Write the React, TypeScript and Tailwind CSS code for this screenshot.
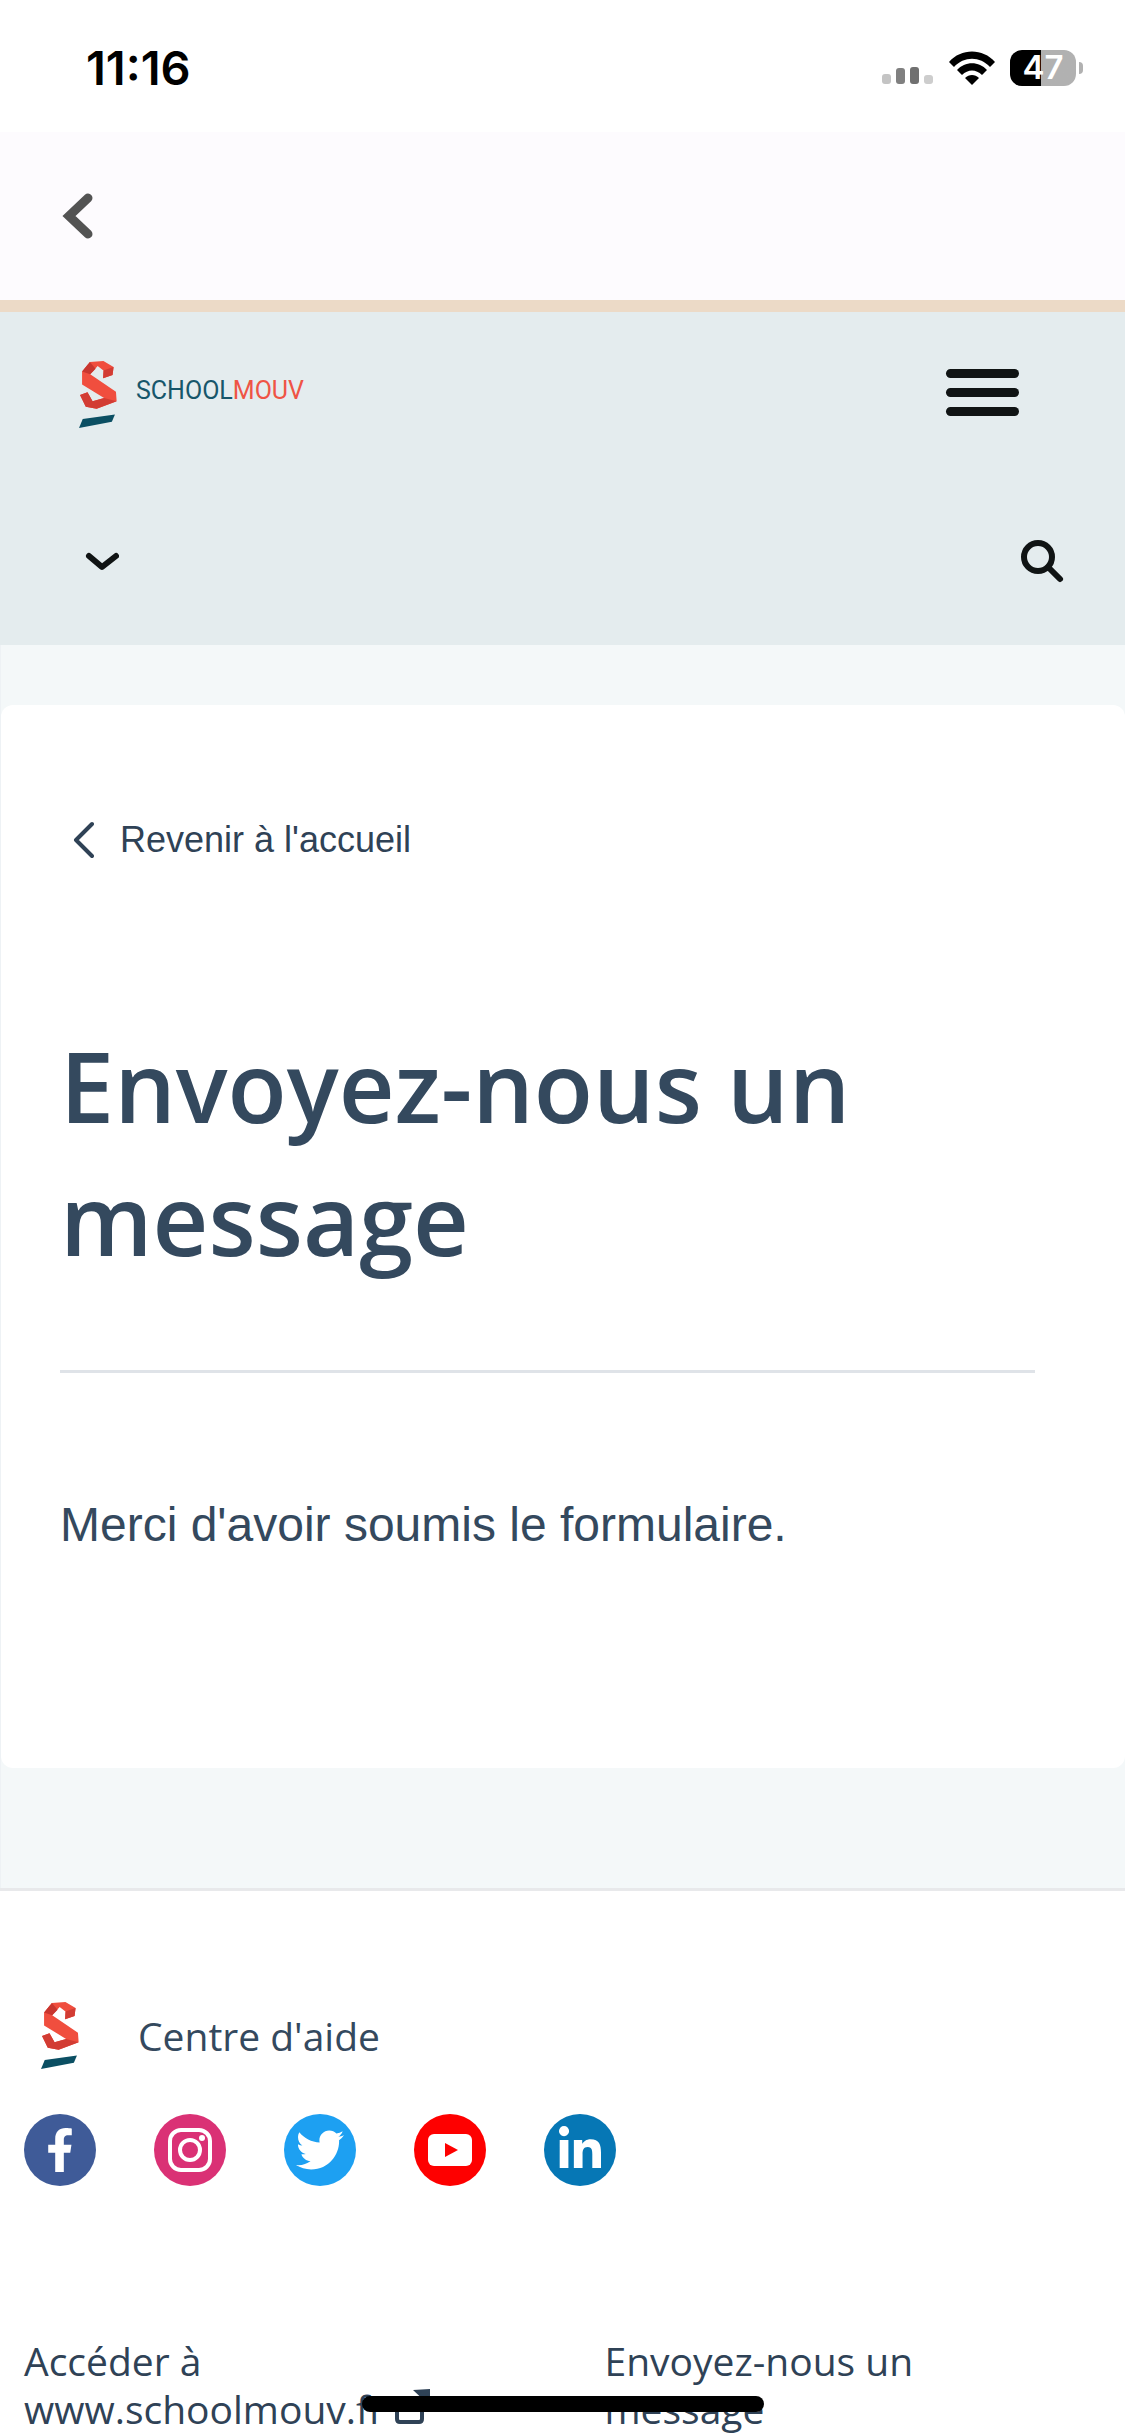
import { FaFacebookF, FaTwitter, FaLinkedinIn } from 'react-icons/fa';

const SOCIALS = [
  { name: 'Facebook', bg: 'bg-[#3f5b98]' },
  { name: 'Instagram', bg: 'bg-[#da3175]' },
  { name: 'Twitter', bg: 'bg-[#1da0f2]' },
  { name: 'YouTube', bg: 'bg-[#fe0000]' },
  { name: 'LinkedIn', bg: 'bg-[#0677b5]' },
];

function SocialIcon({ name }: { name: string }) {
  switch (name) {
    case 'Facebook':
      return <FaFacebookF className="size-11" />;
    case 'Instagram':
      return (
        <svg viewBox="0 0 44 44" className="w-11" fill="none" stroke="white" strokeWidth="4">
          <rect x="2" y="2" width="40" height="40" rx="11" />
          <circle cx="22" cy="22" r="10" />
          <circle cx="34" cy="10" r="3" fill="white" stroke="none" />
        </svg>
      );
    case 'Twitter':
      return <FaTwitter className="size-12" />;
    case 'LinkedIn':
      return <FaLinkedinIn className="size-12" />;
    default:
      return (
        <svg viewBox="0 0 44 32" className="w-11">
          <rect width="44" height="32" rx="6" fill="white" />
          <path d="M17 9v14l13-7z" fill="#fe0000" />
        </svg>
      );
  }
}

function RibbonLogo({ className }: { className: string }) {
  return (
    <svg viewBox="120 66 118 204" className={className} aria-hidden="true">
      <path d="M132 100 155 72 195 69 225 87 222 110 194 120 196 98 178 84 156 108 232 160 234 188 175 210 143 204 126 169 148 161 163 188 197 178 132 138z" fill="#f04e3e" />
      <path d="M132 100 155 72 172 92 156 108z" fill="#c8362f" />
      <path d="M195 97 225 87 222 110 194 120z" fill="#d23c33" />
      <path d="M126 169 148 161 163 188 197 178 234 188 175 210 143 204z" fill="#d23c33" />
      <path d="M134 240 229 227 220 248 123 267z" fill="#0b4f63" />
    </svg>
  );
}

function StatusBar() {
  return (
    <div className="flex h-[132px] shrink-0 items-center justify-between bg-white pt-1 pr-[42px] pl-[86px]">
      <span className="font-[Inter,sans-serif] text-[47px] font-semibold text-black">11:16</span>
      <div className="flex items-center gap-[15px]">
        <svg viewBox="0 0 52 36" className="w-[52px]" aria-hidden="true">
          <rect x="0" y="24" width="9" height="10" rx="3" fill="#c4c4c4" />
          <rect x="14" y="18" width="9" height="16" rx="3" fill="#808080" />
          <rect x="28" y="17" width="9" height="17" rx="3" fill="#707070" />
          <rect x="42" y="25" width="9" height="9" rx="3" fill="#cdcdcd" />
        </svg>
        <svg viewBox="0 0 46 34" className="w-[46px]" aria-hidden="true">
          <path d="M0 11C12-3 34-3 46 11L41 16C31 5 15 5 5 16z" />
          <path d="M8 19C16 10 30 10 38 19L33 24C27 18 19 18 13 24z" />
          <path d="M16 27C20 23 26 23 30 27L23 34z" />
        </svg>
        <div className="flex items-center gap-[3px]">
          <div className="flex h-9 w-[66px] items-center justify-center rounded-xl bg-linear-to-r from-black from-47% to-[#b1b1b1] to-47% font-[Inter,sans-serif] text-[33px] font-semibold text-white">
            47
          </div>
          <div className="h-3 w-1 rounded-r-full bg-[#b1b1b1]" />
        </div>
      </div>
    </div>
  );
}

function Header() {
  return (
    <header className="shrink-0 bg-[#e4ecee]">
      <div className="flex h-[162px] items-center justify-between pr-[106px] pl-[78px]">
        <a href="#" className="flex items-center gap-[18px] pt-1">
          <RibbonLogo className="w-10" />
          <span className="pb-2 font-[Roboto,'Liberation_Sans',sans-serif] text-[25px] text-[#17566a]">
            SCHOOL<span className="text-[#ef5445]">MOUV</span>
          </span>
        </a>
        <button type="button" aria-label="Menu" className="flex w-[73px] flex-col gap-2.5 pb-0.5">
          <span className="h-[9px] rounded-full bg-[#101414]" />
          <span className="h-[9px] rounded-full bg-[#101414]" />
          <span className="h-[9px] rounded-full bg-[#101414]" />
        </button>
      </div>
      <div className="flex h-[171px] items-center justify-between pt-1 pr-[60px] pl-[85px]">
        <button type="button" aria-label="Catégories">
          <svg viewBox="0 0 34 20" className="w-[34px]" fill="none" stroke="#101414" strokeWidth="6" strokeLinecap="round" strokeLinejoin="round">
            <path d="M4 4 17 15 31 4" />
          </svg>
        </button>
        <button type="button" aria-label="Rechercher">
          <svg viewBox="0 0 45 45" className="w-[45px]" fill="none" stroke="#101414" strokeLinecap="round">
            <circle cx="18" cy="18" r="14" strokeWidth="6" />
            <path d="M29 29 40 40" strokeWidth="6" />
          </svg>
        </button>
      </div>
    </header>
  );
}

function Footer() {
  return (
    <footer className="border-t-3 border-[#e8e9eb] bg-white px-6 pt-[110px] font-['Open_Sans',sans-serif] text-[#34495e]">
      <a href="#" className="flex items-center gap-[58px] pl-4">
        <RibbonLogo className="w-10" />
        <span className="text-[39px] leading-[48px]">Centre d'aide</span>
      </a>
      <ul className="mt-[44px] flex gap-[58px]">
        {SOCIALS.map((social) => (
          <li key={social.name}>
            <a
              href="#"
              aria-label={social.name}
              className={`flex size-[72px] items-center justify-center rounded-full text-white ${social.bg}`}
            >
              <SocialIcon name={social.name} />
            </a>
          </li>
        ))}
      </ul>
      <div className="mt-[151px] grid grid-cols-2 gap-x-[84px] text-[39px] leading-[48px] text-[#2f4256]">
        <a href="#">
          Accéder à<br />
          www.schoolmouv.fr{' '}
          <svg viewBox="0 0 36 36" className="inline w-9 align-baseline" fill="none" stroke="currentColor" strokeWidth="4">
            <path d="M14 10H5q-3 0-3 3v18q0 3 3 3h19q3 0 3-3V20" />
            <path d="M16 22 29 7" />
            <path d="M18 2 35 1V18z" fill="currentColor" stroke="none" />
          </svg>
        </a>
        <a href="#">
          Envoyez-nous un
          <br />
          message
        </a>
      </div>
    </footer>
  );
}

export default function App() {
  return (
    <div className="flex h-screen flex-col overflow-hidden bg-white">
      <StatusBar />
      <nav className="flex h-[180px] shrink-0 items-center border-b-12 border-[#ecdac7] bg-[#fdfbfe] pl-[60px]">
        <button type="button" aria-label="Retour">
          <svg viewBox="0 0 34 48" className="w-[34px]" fill="none" stroke="#535353" strokeWidth="9" strokeLinecap="round">
            <path d="M28 6 9 24 28 42" />
          </svg>
        </button>
      </nav>
      <Header />

      <main className="shrink-0 border-l border-[#eef2f5] bg-[#f4f8f9] pt-[60px] pb-[120px]">
        <section className="rounded-xl bg-white pt-[108px] pr-[90px] pb-[207px] pl-[59px] text-[#34495e]">
          <a href="#" className="flex items-center gap-[26px] pl-3 font-['Liberation_Sans',Arial,sans-serif] text-4xl leading-[54px] text-[#2f4256]">
            <svg viewBox="0 0 22 38" className="w-[22px]" fill="none" stroke="currentColor" strokeWidth="4" strokeLinecap="round" strokeLinejoin="round">
              <path d="M20 3 4 19 20 35" />
            </svg>
            Revenir à l'accueil
          </a>
          <h1 className="mt-[152px] border-b-3 border-[#dfe3e8] pb-[85px] font-['Open_Sans',sans-serif] text-[97px] leading-[133px] font-semibold">
            Envoyez-nous un message
          </h1>
          <p className="mt-[116px] font-['Liberation_Sans',Arial,sans-serif] text-5xl leading-[72px]">
            Merci d'avoir soumis le formulaire.
          </p>
        </section>
      </main>
      <Footer />

      {/* home indicator */}
      <div className="fixed bottom-6 left-1/2 h-4 w-[402px] -translate-x-1/2 rounded-full bg-black" />
    </div>
  );
}
